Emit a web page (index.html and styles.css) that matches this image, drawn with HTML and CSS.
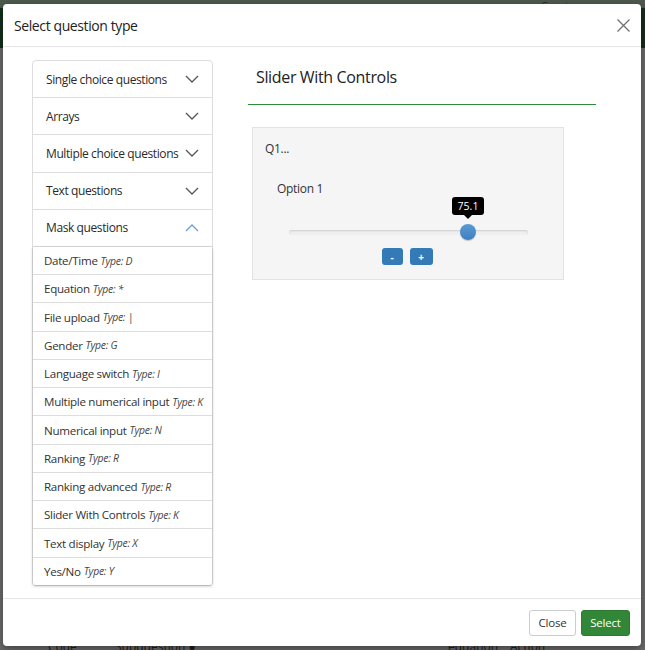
FILE: index.html
```html
<!DOCTYPE html>
<html>
<head>
<meta charset="utf-8">
<link rel="stylesheet" href="styles.css">
</head>
<body>
<div class="page">
  <div class="topbar"><span class="create">Create survey</span></div>
  <div class="bottom-cols"><span class="c1">Code</span><span class="c2">Subquestion ●</span><span class="c3">equation</span><span class="c4">Action</span></div>
</div>
<div class="modal">
  <div class="modal-header">
    <h4 class="modal-title">Select question type</h4>
    <span class="close-x"><svg width="13" height="13" viewBox="0 0 13 13"><path d="M0.5 0.5 L12.5 12.5 M12.5 0.5 L0.5 12.5" stroke="#6f6f6f" stroke-width="1.3" fill="none"/></svg></span>
  </div>
  <div class="modal-body">
    <div class="accordion">
      <div class="acc-head"><span>Single choice questions</span><svg class="chev" width="14" height="8" viewBox="0 0 14 8"><path d="M1 1 L7 7 L13 1" stroke="#555" stroke-width="1.3" fill="none"/></svg></div>
      <div class="acc-head"><span>Arrays</span><svg class="chev" width="14" height="8" viewBox="0 0 14 8"><path d="M1 1 L7 7 L13 1" stroke="#555" stroke-width="1.3" fill="none"/></svg></div>
      <div class="acc-head"><span>Multiple choice questions</span><svg class="chev" width="14" height="8" viewBox="0 0 14 8"><path d="M1 1 L7 7 L13 1" stroke="#555" stroke-width="1.3" fill="none"/></svg></div>
      <div class="acc-head"><span>Text questions</span><svg class="chev" width="14" height="8" viewBox="0 0 14 8"><path d="M1 1 L7 7 L13 1" stroke="#555" stroke-width="1.3" fill="none"/></svg></div>
      <div class="acc-head open"><span>Mask questions</span><svg class="chev" width="14" height="8" viewBox="0 0 14 8"><path d="M1 7 L7 1 L13 7" stroke="#6a9fd8" stroke-width="1.3" fill="none"/></svg></div>
      <ul class="qlist">
        <li>Date/Time <i>Type: D</i></li>
        <li>Equation <i>Type: *</i></li>
        <li>File upload <i>Type: |</i></li>
        <li>Gender <i>Type: G</i></li>
        <li>Language switch <i>Type: I</i></li>
        <li>Multiple numerical input <i>Type: K</i></li>
        <li>Numerical input <i>Type: N</i></li>
        <li>Ranking <i>Type: R</i></li>
        <li>Ranking advanced <i>Type: R</i></li>
        <li>Slider With Controls <i>Type: K</i></li>
        <li>Text display <i>Type: X</i></li>
        <li>Yes/No <i>Type: Y</i></li>
      </ul>
    </div>
    <div class="preview-col">
      <h3 class="preview-title">Slider With Controls</h3>
      <div class="preview-box">
        <div class="q">Q1...</div>
        <div class="opt">Option 1</div>
        <div class="slider">
          <div class="track"></div>
          <div class="handle"></div>
          <div class="tip">75.1</div>
        </div>
        <div class="btns"><span class="sbtn">-</span><span class="sbtn">+</span></div>
      </div>
    </div>
  </div>
  <div class="modal-footer">
    <button class="btn btn-close">Close</button>
    <button class="btn btn-select">Select</button>
  </div>
</div>
</body>
</html>
```
FILE: styles.css
```css
html, body {
  margin: 0;
  padding: 0;
}
body {
  width: 645px;
  height: 650px;
  overflow: hidden;
  background: #6b6b6b;
  font-family: "Open Sans", "Noto Sans", sans-serif;
  color: #333;
  position: relative;
}
.page {
  height: 650px;
  display: flex;
  flex-direction: column;
  justify-content: space-between;
}
.topbar {
  height: 48px;
  background: linear-gradient(#4e5a4e 0, #4e5a4e 8px, #13301a 8px);
  position: relative;
}
.create {
  position: absolute;
  left: 541px;
  top: 0;
  font-size: 11px;
  line-height: 11px;
  color: #2b2b2b;
}
.bottom-cols {
  height: 12px;
  font-size: 12px;
  color: #1d1d1d;
  position: relative;
}
.bottom-cols span { position: absolute; top: 2px; line-height: 14px; }
.c1 { left: 48px; }
.c2 { left: 115px; }
.c3 { left: 448px; }
.c4 { left: 510px; }

.modal {
  position: absolute;
  left: 3px;
  top: 4px;
  width: 638px;
  height: 642px;
  background: #fff;
  border-radius: 4px;
  box-shadow: 0 3px 9px rgba(0,0,0,0.4);
  display: flex;
  flex-direction: column;
}
.modal-header {
  height: 42px;
  border-bottom: 1px solid #e5e5e5;
  display: flex;
  align-items: center;
  justify-content: space-between;
  padding: 0 11px 0 11px;
}
.modal-title {
  margin: 0;
  font-size: 14px;
  letter-spacing: -0.4px;
  font-weight: 400;
  color: #222;
}
.close-x { display: flex; margin-top: 1px; }

.modal-body {
  flex: 1;
  display: flex;
  align-items: flex-start;
  padding: 13px 0 0 29px;
}
.accordion {
  width: 179px;
  border: 1px solid #ddd;
  border-radius: 4px;
}
.acc-head {
  height: 36.2px;
  border-bottom: 1px solid #ddd;
  display: flex;
  align-items: center;
  justify-content: space-between;
  padding: 0 13px 0 13px;
  font-size: 12px;
  letter-spacing: -0.4px;
  color: #2a2a2a;
}
.acc-head span { white-space: nowrap; }
.chev { flex: none; }
.qlist {
  list-style: none;
  margin: 0;
  padding: 0;
  box-shadow: 0 1px 3px rgba(0,0,0,0.25);
}
.qlist li {
  height: 27.25px;
  border-bottom: 1px solid #ddd;
  display: flex;
  align-items: center;
  padding-left: 11px;
  font-size: 11.6px;
  letter-spacing: -0.3px;
  color: #333;
  white-space: nowrap;
}
.qlist li:last-child { border-bottom: none; }
.qlist i {
  font-size: 10.4px;
  letter-spacing: -0.25px;
  margin-left: 3px;
  color: #444;
}

.preview-col {
  margin-left: 35px;
  width: 348px;
}
.preview-title {
  margin: 0;
  height: 44px;
  line-height: 35px;
  padding-left: 8px;
  font-size: 16px;
  letter-spacing: -0.35px;
  font-weight: 400;
  color: #222;
  border-bottom: 1px solid #2e8b37;
}
.preview-box {
  margin: 22px 0 0 4px;
  width: 310px;
  height: 151px;
  background: #f5f5f5;
  border: 1px solid #e3e3e3;
  position: relative;
}
.q {
  font-size: 12px;
  letter-spacing: -0.3px;
  margin: 12px 0 0 12px;
  color: #333;
}
.opt {
  font-size: 12px;
  letter-spacing: -0.3px;
  margin: 23px 0 0 24px;
  color: #333;
}
.slider {
  position: relative;
  height: 22px;
  margin: 26px 0 0 36px;
  width: 239px;
}
.track {
  position: absolute;
  left: 0;
  right: 0;
  top: 7px;
  height: 5px;
  border-radius: 3px;
  background: #f0f0f0;
  box-shadow: inset 0 1px 2px rgba(0,0,0,0.15);
}
.handle {
  position: absolute;
  left: 171px;
  top: 1px;
  width: 16px;
  height: 16px;
  border-radius: 50%;
  background: linear-gradient(#5a9bd5, #3f7fbf);
  box-shadow: 0 1px 1px rgba(0,0,0,0.2);
}
.tip {
  position: absolute;
  left: 163px;
  top: -26px;
  width: 32px;
  height: 18px;
  line-height: 18px;
  background: #000;
  color: #fff;
  font-size: 10.5px;
  text-align: center;
  border-radius: 3px;
}
.tip::after {
  content: "";
  position: absolute;
  left: 12px;
  bottom: -4px;
  border-left: 4px solid transparent;
  border-right: 4px solid transparent;
  border-top: 4px solid #000;
}
.btns {
  display: flex;
  justify-content: center;
  gap: 7px;
  margin-top: 3px;
  padding-right: 2px;
}
.sbtn {
  width: 21px;
  height: 17px;
  background: #337ab7;
  color: #fff;
  border-radius: 3px;
  font-size: 10px;
  font-weight: 700;
  display: flex;
  align-items: center;
  justify-content: center;
}
.sbtn + .sbtn { width: 23px; }

.modal-footer {
  height: 47px;
  border-top: 1px solid #e5e5e5;
  display: flex;
  align-items: center;
  justify-content: flex-end;
  gap: 5px;
  padding-right: 11px;
}
.btn {
  height: 26px;
  font-family: "Open Sans", "Noto Sans", sans-serif;
  font-size: 11.5px;
  letter-spacing: -0.2px;
  border-radius: 3px;
  padding: 0 6px;
  cursor: pointer;
}
.btn-close {
  background: #fff;
  border: 1px solid #ccc;
  color: #333;
  width: 47px;
}
.btn-select {
  background: #328637;
  border: 1px solid #2d7a31;
  color: #fff;
  width: 49px;
}
```
